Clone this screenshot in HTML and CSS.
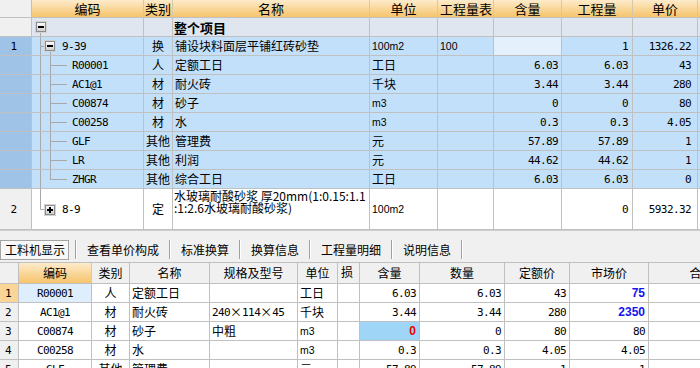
FILE: index.html
```html
<!DOCTYPE html>
<html lang="zh-CN">
<head>
<meta charset="utf-8">
<title>工料机</title>
<link rel="stylesheet" href="styles.css">
</head>
<body>
<div class="top">
  <div class="row hdr">
    <div class="c rn"></div>
    <div class="c h">编码</div>
    <div class="c h">类别</div>
    <div class="c h">名称</div>
    <div class="c h">单位</div>
    <div class="c h hl">工程量表</div>
    <div class="c h">含量</div>
    <div class="c h">工程量</div>
    <div class="c h">单价</div>
    <div class="c h"></div>
  </div>
  <div class="row grp">
    <div class="c rn"></div>
    <div class="c code">
      <svg class="tree" width="16" height="18" viewBox="0 0 16 18">
        <defs>
          <linearGradient id="bx" x1="0" y1="0" x2="0" y2="1">
            <stop offset="0" stop-color="#ffffff"/>
            <stop offset="1" stop-color="#cdcdcd"/>
          </linearGradient>
        </defs>
        <path d="M8.5 15V19" stroke="#a8a8a8" fill="none"/>
        <rect x="3.5" y="3.5" width="11" height="11" fill="none" stroke="#d2d2d2"/>
        <rect x="4.5" y="4.5" width="9" height="9" fill="url(#bx)" stroke="#8c8c8c"/>
        <path d="M6 9H12" stroke="#000" stroke-width="2"/>
      </svg>
    </div>
    <div class="c"></div>
    <div class="c b">整个项目</div>
    <div class="c"></div>
    <div class="c"></div>
    <div class="c"></div>
    <div class="c"></div>
    <div class="c"></div>
    <div class="c"></div>
  </div>
  <div class="row sel">
    <div class="c rn n">1</div>
    <div class="c code">
      <svg class="tree" width="26" height="18" viewBox="0 0 26 18">
        <path d="M8.5 0V19M8.5 9.5H12M18.5 15V19" stroke="#a8a8a8" fill="none"/>
        <rect x="12.5" y="3.5" width="11" height="11" fill="none" stroke="#d2d2d2"/>
        <rect x="13.5" y="4.5" width="9" height="9" fill="url(#bx)" stroke="#8c8c8c"/>
        <path d="M15 9H21" stroke="#000" stroke-width="2"/>
      </svg>
      <span class="n t">9-39</span>
    </div>
    <div class="c m">换</div>
    <div class="c">铺设块料面层平铺红砖砂垫</div>
    <div class="c u">100m2</div>
    <div class="c u">100</div>
    <div class="c foc"></div>
    <div class="c r4 n">1</div>
    <div class="c r6 n">1326.22</div>
    <div class="c"></div>
  </div>
  <div class="row sel">
    <div class="c rn"></div>
    <div class="c code">
      <svg class="tree" width="36" height="18" viewBox="0 0 36 18"><path d="M8.5 0V19M18.5 0V19M18 9.5H35" stroke="#a8a8a8" fill="none"/></svg>
      <span class="n t">R00001</span>
    </div>
    <div class="c m">人</div>
    <div class="c">定额工日</div>
    <div class="c">工日</div>
    <div class="c"></div>
    <div class="c r3 n">6.03</div>
    <div class="c r4 n">6.03</div>
    <div class="c r6 n">43</div>
    <div class="c"></div>
  </div>
  <div class="row sel">
    <div class="c rn"></div>
    <div class="c code">
      <svg class="tree" width="36" height="18" viewBox="0 0 36 18"><path d="M8.5 0V19M18.5 0V19M18 9.5H35" stroke="#a8a8a8" fill="none"/></svg>
      <span class="n t">AC1@1</span>
    </div>
    <div class="c m">材</div>
    <div class="c">耐火砖</div>
    <div class="c">千块</div>
    <div class="c"></div>
    <div class="c r3 n">3.44</div>
    <div class="c r4 n">3.44</div>
    <div class="c r6 n">280</div>
    <div class="c"></div>
  </div>
  <div class="row sel">
    <div class="c rn"></div>
    <div class="c code">
      <svg class="tree" width="36" height="18" viewBox="0 0 36 18"><path d="M8.5 0V19M18.5 0V19M18 9.5H35" stroke="#a8a8a8" fill="none"/></svg>
      <span class="n t">C00874</span>
    </div>
    <div class="c m">材</div>
    <div class="c">砂子</div>
    <div class="c u">m3</div>
    <div class="c"></div>
    <div class="c r3 n">0</div>
    <div class="c r4 n">0</div>
    <div class="c r6 n">80</div>
    <div class="c"></div>
  </div>
  <div class="row sel">
    <div class="c rn"></div>
    <div class="c code">
      <svg class="tree" width="36" height="18" viewBox="0 0 36 18"><path d="M8.5 0V19M18.5 0V19M18 9.5H35" stroke="#a8a8a8" fill="none"/></svg>
      <span class="n t">C00258</span>
    </div>
    <div class="c m">材</div>
    <div class="c">水</div>
    <div class="c u">m3</div>
    <div class="c"></div>
    <div class="c r3 n">0.3</div>
    <div class="c r4 n">0.3</div>
    <div class="c r6 n">4.05</div>
    <div class="c"></div>
  </div>
  <div class="row sel">
    <div class="c rn"></div>
    <div class="c code">
      <svg class="tree" width="36" height="18" viewBox="0 0 36 18"><path d="M8.5 0V19M18.5 0V19M18 9.5H35" stroke="#a8a8a8" fill="none"/></svg>
      <span class="n t">GLF</span>
    </div>
    <div class="c m">其他</div>
    <div class="c">管理费</div>
    <div class="c">元</div>
    <div class="c"></div>
    <div class="c r3 n">57.89</div>
    <div class="c r4 n">57.89</div>
    <div class="c r6 n">1</div>
    <div class="c"></div>
  </div>
  <div class="row sel">
    <div class="c rn"></div>
    <div class="c code">
      <svg class="tree" width="36" height="18" viewBox="0 0 36 18"><path d="M8.5 0V19M18.5 0V19M18 9.5H35" stroke="#a8a8a8" fill="none"/></svg>
      <span class="n t">LR</span>
    </div>
    <div class="c m">其他</div>
    <div class="c">利润</div>
    <div class="c">元</div>
    <div class="c"></div>
    <div class="c r3 n">44.62</div>
    <div class="c r4 n">44.62</div>
    <div class="c r6 n">1</div>
    <div class="c"></div>
  </div>
  <div class="row sel">
    <div class="c rn"></div>
    <div class="c code">
      <svg class="tree" width="36" height="18" viewBox="0 0 36 18"><path d="M8.5 0V19M18.5 0V9.5M18 9.5H35" stroke="#a8a8a8" fill="none"/></svg>
      <span class="n t">ZHGR</span>
    </div>
    <div class="c m">其他</div>
    <div class="c">综合工日</div>
    <div class="c">工日</div>
    <div class="c"></div>
    <div class="c r3 n">6.03</div>
    <div class="c r4 n">6.03</div>
    <div class="c r6 n">0</div>
    <div class="c"></div>
  </div>
  <div class="row tall">
    <div class="c rn n">2</div>
    <div class="c code">
      <svg class="tree" width="26" height="40" viewBox="0 0 26 40">
        <path d="M8.5 0V20.5H12" stroke="#a8a8a8" fill="none"/>
        <rect x="12.5" y="15.5" width="11" height="11" fill="none" stroke="#d2d2d2"/>
        <rect x="13.5" y="16.5" width="9" height="9" fill="url(#bx)" stroke="#8c8c8c"/>
        <path d="M15 21H21M18 18V24" stroke="#000" stroke-width="2"/>
      </svg>
      <span class="n t">8-9</span>
    </div>
    <div class="c m">定</div>
    <div class="c wrap"><span class="ln">水玻璃耐酸砂浆 厚20mm(1:0.15:1.1</span><span class="ln">:1:2.6水玻璃耐酸砂浆)</span></div>
    <div class="c u">100m2</div>
    <div class="c"></div>
    <div class="c"></div>
    <div class="c r4 n">0</div>
    <div class="c r6 n">5932.32</div>
    <div class="c"></div>
  </div>
</div>

<div class="tabs">
  <span class="tab on">工料机显示</span>
  <span class="sep"></span>
  <span class="tab">查看单价构成</span>
  <span class="sep"></span>
  <span class="tab">标准换算</span>
  <span class="sep"></span>
  <span class="tab">换算信息</span>
  <span class="sep"></span>
  <span class="tab">工程量明细</span>
  <span class="sep"></span>
  <span class="tab">说明信息</span>
  <span class="sep"></span>
</div>

<div class="bot">
  <div class="row hdr">
    <div class="c h rn"></div>
    <div class="c h on">编码</div>
    <div class="c h">类别</div>
    <div class="c h">名称</div>
    <div class="c h">规格及型号</div>
    <div class="c h">单位</div>
    <div class="c h ht">损</div>
    <div class="c h">含量</div>
    <div class="c h">数量</div>
    <div class="c h">定额价</div>
    <div class="c h">市场价</div>
    <div class="c h">合价</div>
  </div>
  <div class="row">
    <div class="c rn n cur">1</div>
    <div class="c m n codecur">R00001</div>
    <div class="c m">人</div>
    <div class="c">定额工日</div>
    <div class="c"></div>
    <div class="c">工日</div>
    <div class="c"></div>
    <div class="c r3 n">6.03</div>
    <div class="c r3 n">6.03</div>
    <div class="c r3 n">43</div>
    <div class="c r3 blue">75</div>
    <div class="c"></div>
  </div>
  <div class="row">
    <div class="c rn n">2</div>
    <div class="c m n">AC1@1</div>
    <div class="c m">材</div>
    <div class="c">耐火砖</div>
    <div class="c"><span class="n">240</span>×<span class="n">114</span>×<span class="n">45</span></div>
    <div class="c">千块</div>
    <div class="c"></div>
    <div class="c r3 n">3.44</div>
    <div class="c r3 n">3.44</div>
    <div class="c r3 n">280</div>
    <div class="c r3 blue">2350</div>
    <div class="c"></div>
  </div>
  <div class="row">
    <div class="c rn n">3</div>
    <div class="c m n">C00874</div>
    <div class="c m">材</div>
    <div class="c">砂子</div>
    <div class="c">中粗</div>
    <div class="c u">m3</div>
    <div class="c"></div>
    <div class="c r3 red">0</div>
    <div class="c r3 n">0</div>
    <div class="c r3 n">80</div>
    <div class="c r3 n">80</div>
    <div class="c"></div>
  </div>
  <div class="row">
    <div class="c rn n">4</div>
    <div class="c m n">C00258</div>
    <div class="c m">材</div>
    <div class="c">水</div>
    <div class="c"></div>
    <div class="c u">m3</div>
    <div class="c"></div>
    <div class="c r3 n">0.3</div>
    <div class="c r3 n">0.3</div>
    <div class="c r3 n">4.05</div>
    <div class="c r3 n">4.05</div>
    <div class="c"></div>
  </div>
  <div class="row">
    <div class="c rn n">5</div>
    <div class="c m n">GLF</div>
    <div class="c m">其他</div>
    <div class="c">管理费</div>
    <div class="c"></div>
    <div class="c">元</div>
    <div class="c"></div>
    <div class="c r3 n">57.89</div>
    <div class="c r3 n">57.89</div>
    <div class="c r3 n">1</div>
    <div class="c r3 n">1</div>
    <div class="c"></div>
  </div>
</div>
</body>
</html>
```

FILE: styles.css
```css
* { box-sizing: border-box; }
html, body { margin: 0; padding: 0; }
body {
  width: 700px;
  height: 368px;
  overflow: hidden;
  background: #f0f0f0;
  font-family: "Noto Sans CJK SC", "Noto Sans", sans-serif;
  font-size: 12px;
  color: #000;
}

.top, .bot { width: 760px; background: #fff; }

.row { display: grid; }
.top .row {
  grid-template-columns: 32px 112px 29px 197px 68px 56px 68px 71px 65px 60px;
  height: 19px;
}
.top .row.hdr { height: 18px; }
.top .row.tall { height: 41px; }

.c {
  border-right: 1px solid #c0c0c0;
  border-bottom: 1px solid #c0c0c0;
  display: flex;
  align-items: center;
  overflow: hidden;
  white-space: nowrap;
  padding: 0 2px;
  line-height: 1;
  min-width: 0;
}

.h {
  justify-content: center;
  font-size: 13px;
  background: linear-gradient(#fdebcb, #f6c46c);
  border-right-color: #d8c8a8;
}
.h.hl { justify-content: flex-start; padding-left: 2px; }
.rn { background: #f0f0f0; justify-content: center; padding: 0 4px 0 0; }

.m { justify-content: center; padding: 0; }
.r3 { justify-content: flex-end; padding-right: 3px; }
.r4 { justify-content: flex-end; padding-right: 4px; }
.r6 { justify-content: flex-end; padding-right: 6px; }

.n {
  font-family: "DejaVu Sans Mono", "Liberation Mono", monospace;
  font-size: 11px;
  letter-spacing: -0.6px;
}
.u {
  font-family: "Liberation Sans", Arial, sans-serif;
  font-size: 10.5px;
}
.b { font-weight: bold; font-size: 13px; padding-left: 1px; }

.code { padding: 0; }
.tree { display: block; flex: none; overflow: visible; }
.t { margin-left: 4px; }

.grp .c { background: #dfe6ef; }
.grp .rn { background: #f0f0f0; }
.sel .c { background: #c3e0fb; }
.sel .rn { background: #9fc3e7; }
.sel .foc { background: #e4f1fd; }

.wrap {
  flex-direction: column;
  align-items: flex-start;
  justify-content: flex-start;
  padding: 1px 0 0 1px;
}
.ln { display: block; line-height: 12px; height: 12px; }

.tabs {
  height: 32px;
  border-top: 1px solid #d0d0d0;
  display: flex;
  align-items: flex-end;
  padding-bottom: 2px;
}
.tab {
  height: 20px;
  display: flex;
  align-items: center;
  padding: 0 10px;
  font-size: 12px;
  line-height: 1;
}
.tab.on {
  border: 1px solid #a4a4a4;
  background: #f7f7f7;
  padding: 0 3px 0 4px;
  margin-right: 6px;
}
.sep {
  width: 2px;
  height: 19px;
  margin-bottom: 1px;
  border-left: 1px solid #a0a0a0;
  border-right: 1px solid #ffffff;
}

.bot { border-top: 1px solid #c0c0c0; }
.bot .row {
  grid-template-columns: 19px 73px 38px 80px 88px 40px 22px 60px 85px 65px 79px 106px;
  height: 19px;
}
.bot .row.hdr { height: 21px; }
.bot .h {
  background: #f0f0f0;
  font-size: 12px;
  border-right-color: #c0c0c0;
}
.bot .h.on { background: linear-gradient(#fdebcb, #f6c46c); border-right-color: #d8c8a8; }
.bot .h.ht { align-items: flex-start; justify-content: flex-start; padding: 3px 0 0 3px; }
.bot .rn { justify-content: flex-start; padding: 0 0 0 5px; }
.bot .rn.cur { background: #f9d697; }
.bot .codecur { background: #deeefc; }

.blue {
  font-family: "Liberation Sans", Arial, sans-serif;
  font-weight: bold;
  font-size: 12px;
  color: #1414f0;
}
.red {
  font-family: "Liberation Sans", Arial, sans-serif;
  font-weight: bold;
  font-size: 12px;
  color: #f00000;
  background: #9fd6f7;
}
```
